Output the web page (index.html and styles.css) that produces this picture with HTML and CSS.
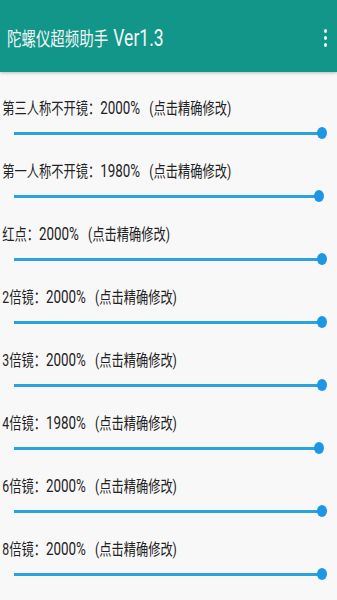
FILE: index.html
```html
<!DOCTYPE html>
<html lang="zh">
<head>
<meta charset="utf-8">
<link rel="stylesheet" href="styles.css">
</head>
<body>
<header class="appbar">
  <h1 class="title"><span class="title-cjk">陀螺仪超频助手</span> <span class="title-lat">Ver1.3</span></h1>
  <div class="overflow"><i></i><i></i><i></i></div>
</header>
<main class="list">
  <section class="row first">
    <div class="label"><span class="name">第三人称不开镜：</span><span class="val">2000%</span><span class="hint">(点击精确修改)</span></div>
    <div class="slider"><div class="track"><div class="fill" style="width:100%"></div><div class="thumb" style="left:100%"></div></div></div>
  </section>
  <section class="row">
    <div class="label"><span class="name">第一人称不开镜：</span><span class="val">1980%</span><span class="hint">(点击精确修改)</span></div>
    <div class="slider"><div class="track"><div class="fill" style="width:99%"></div><div class="thumb" style="left:99%"></div></div></div>
  </section>
  <section class="row">
    <div class="label"><span class="name">红点：</span><span class="val">2000%</span><span class="hint">(点击精确修改)</span></div>
    <div class="slider"><div class="track"><div class="fill" style="width:100%"></div><div class="thumb" style="left:100%"></div></div></div>
  </section>
  <section class="row">
    <div class="label"><span class="name">2倍镜：</span><span class="val">2000%</span><span class="hint">(点击精确修改)</span></div>
    <div class="slider"><div class="track"><div class="fill" style="width:100%"></div><div class="thumb" style="left:100%"></div></div></div>
  </section>
  <section class="row">
    <div class="label"><span class="name">3倍镜：</span><span class="val">2000%</span><span class="hint">(点击精确修改)</span></div>
    <div class="slider"><div class="track"><div class="fill" style="width:100%"></div><div class="thumb" style="left:100%"></div></div></div>
  </section>
  <section class="row">
    <div class="label"><span class="name">4倍镜：</span><span class="val">1980%</span><span class="hint">(点击精确修改)</span></div>
    <div class="slider"><div class="track"><div class="fill" style="width:99%"></div><div class="thumb" style="left:99%"></div></div></div>
  </section>
  <section class="row">
    <div class="label"><span class="name">6倍镜：</span><span class="val">2000%</span><span class="hint">(点击精确修改)</span></div>
    <div class="slider"><div class="track"><div class="fill" style="width:100%"></div><div class="thumb" style="left:100%"></div></div></div>
  </section>
  <section class="row">
    <div class="label"><span class="name">8倍镜：</span><span class="val">2000%</span><span class="hint">(点击精确修改)</span></div>
    <div class="slider"><div class="track"><div class="fill" style="width:100%"></div><div class="thumb" style="left:100%"></div></div></div>
  </section>
</main>
</body>
</html>
```
FILE: styles.css
```css
html, body {
  margin: 0;
  padding: 0;
  background: #f8f8f8;
  height: 100%;
  overflow: hidden;
}
body {
  font-family: Roboto, "Noto Sans CJK SC", sans-serif;
  color: #222;
}
.appbar {
  height: 72px;
  background: #13968a;
  display: flex;
  align-items: center;
  justify-content: space-between;
  padding: 0 10px 0 7px;
  box-sizing: border-box;
  box-shadow: 0 1px 3px rgba(0,0,0,0.25);
  position: relative;
  z-index: 1;
}
.title {
  margin: 3px 0 0;
  font-weight: normal;
  color: #f2f7f6;
  line-height: 26px;
  white-space: nowrap;
  transform: scaleX(0.76);
  transform-origin: left center;
}
.title-cjk {
  font-size: 19px;
}
.title-lat {
  font-size: 23px;
  margin-left: -1px;
}
.overflow {
  display: flex;
  flex-direction: column;
  gap: 3px;
  margin-top: 3px;
}
.overflow i {
  display: block;
  width: 3px;
  height: 4px;
  border-radius: 50%;
  background: #f2f7f6;
}
.list {
  padding-top: 5px;
}
.row {
  padding-top: 21px;
}
.label {
  font-size: 16px;
  line-height: 20px;
  height: 20px;
  padding-left: 3px;
  white-space: nowrap;
  transform: scaleX(0.765);
  transform-origin: left center;
}
.val {
  font-size: 17.5px;
  margin-right: 12px;
}
.hint {
  font-size: 16px;
}
.slider {
  margin: 8px 15px 0 14px;
  height: 14px;
  display: flex;
  align-items: center;
}
.track {
  position: relative;
  flex: 1;
  height: 3px;
  background: #c8c8c8;
}
.fill {
  height: 100%;
  background: #2aa3dd;
}
.thumb {
  position: absolute;
  top: 50%;
  width: 10px;
  height: 12px;
  margin: -6px 0 0 -5px;
  border-radius: 50%;
  background: #1d97e4;
}
```
